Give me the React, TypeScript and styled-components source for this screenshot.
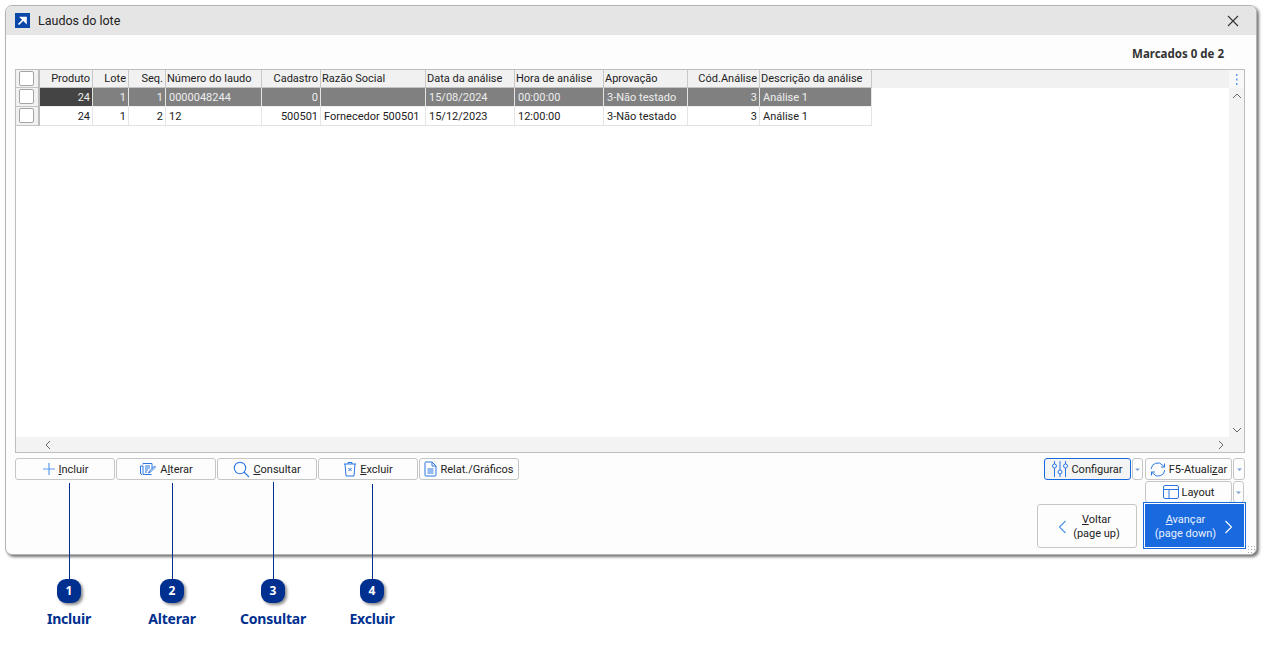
import React from "react";
import styled, { createGlobalStyle } from "styled-components";

const Global = createGlobalStyle`
  html, body { margin: 0; padding: 0; background: #fff; }
  body { font-family: Roboto, "Noto Sans", sans-serif; font-size: 11px; color: #222; }
  u { text-underline-offset: 1px; }
`;

const Page = styled.div`
  width: 1266px;
  height: 645px;
  overflow: hidden;
  padding: 5px 0 0 5px;
  box-sizing: border-box;
`;
const Win = styled.div`
  width: 1252px;
  height: 550px;
  box-sizing: border-box;
  border: 1px solid #b4b4b4;
  border-radius: 7px;
  background: #fdfdfd;
  box-shadow: 2px 2px 3px rgba(0, 0, 0, 0.55);
  display: flex;
  flex-direction: column;
  position: relative;
  overflow: hidden;
`;
const TitleBar = styled.div`
  height: 29px;
  background: #e5e5e5;
  display: flex;
  align-items: center;
  padding: 0 17px 0 9px;
  flex: none;
`;
const TitleText = styled.div`
  font-size: 12.5px;
  color: #222;
  margin-left: 8px;
  flex: 1;
`;
const Body = styled.div`
  flex: 1;
  padding: 0 11px 0 9px;
  display: flex;
  flex-direction: column;
`;
const Count = styled.div`
  height: 34px;
  line-height: 37px;
  text-align: right;
  font-family: "Noto Sans", sans-serif;
  font-weight: 700;
  font-size: 11.5px;
  color: #333;
  padding-right: 21px;
`;
const GridBox = styled.div`
  height: 384px;
  box-sizing: border-box;
  border: 1px solid #bdbdbd;
  display: flex;
  flex-direction: column;
  background: #fff;
`;
const GridMain = styled.div`
  flex: 1;
  display: flex;
  min-height: 0;
`;
const TableArea = styled.div`
  flex: 1;
  background: #fff;
`;
const COLS = "24px 53px 36px 37px 96px 59px 105px 89px 89px 84px 72px 112px";
const Row = styled.div`
  display: grid;
  grid-template-columns: ${COLS};
  height: 19px;
  box-sizing: border-box;
`;
const HeaderRow = styled(Row)`
  height: 18px;
`;
const HeaderStrip = styled.div`
  background: #f1f1f1;
  height: 18px;
`;
const Cell = styled.div<{ $right?: boolean; $sel?: boolean; $first?: boolean; $inset?: boolean }>`
  box-sizing: border-box;
  white-space: nowrap;
  overflow: hidden;
  line-height: 20px;
  font-size: 11px;
  padding: 0 2px 0 ${(p) => (p.$inset ? "3px" : "2px")};
  text-align: ${(p) => (p.$right ? "right" : "left")};
  border-right: 1px solid ${(p) => (p.$sel ? "#e4e4e4" : "#e6e6e6")};
  border-bottom: 1px solid ${(p) => (p.$sel ? "#f0f0f0" : "#e2e2e2")};
  background: ${(p) => (p.$first ? "#444" : p.$sel ? "#808080" : "#fff")};
  color: ${(p) => (p.$sel ? "#eeeeee" : "#222")};
`;
const HeadCell = styled.div<{ $right?: boolean }>`
  box-sizing: border-box;
  white-space: nowrap;
  overflow: hidden;
  line-height: 17px;
  font-size: 11px;
  padding: 0 ${(p) => (p.$right ? "2px" : "1px")};
  text-align: ${(p) => (p.$right ? "right" : "left")};
  background: #f1f1f1;
  border-right: 1px solid #c8c8c8;
  border-bottom: 1px solid #c4c4c4;
  color: #222;
`;
const CheckCell = styled.div`
  box-sizing: border-box;
  display: flex;
  align-items: flex-start;
  padding: 1px 0 0 3px;
  background: #f1f1f1;
  border-right: 2px solid #bdbdbd;
  border-bottom: 1px solid #c4c4c4;
`;
const Check = styled.span`
  width: 15px;
  height: 15px;
  box-sizing: border-box;
  background: #fff;
  border: 1px solid #a4a4a4;
  border-radius: 2px;
  display: block;
`;
const VScroll = styled.div`
  width: 15px;
  flex: none;
  background: #f3f3f3;
  display: flex;
  flex-direction: column;
`;
const Kebab = styled.div`
  width: 15px;
  height: 18px;
  background: #f8f8f8;
  display: flex;
  align-items: center;
  justify-content: center;
`;
const ScrollBtn = styled.div`
  width: 15px;
  height: 15px;
  display: flex;
  align-items: center;
  justify-content: center;
`;
const VTrack = styled.div`
  flex: 1;
  display: flex;
  flex-direction: column;
  justify-content: space-between;
`;
const HScroll = styled.div`
  height: 15px;
  flex: none;
  background: #f3f3f3;
  display: flex;
  justify-content: space-between;
  padding: 0 16px 0 24px;
`;
const Footer = styled.div`
  flex: 1;
  display: flex;
  justify-content: space-between;
  padding-top: 5px;
`;
const LeftTools = styled.div`
  display: flex;
  gap: 1px;
  align-items: flex-start;
`;
const ToolBtn = styled.button<{ $active?: boolean; $w?: number }>`
  width: ${(p) => p.$w ?? 100}px;
  height: 22px;
  box-sizing: border-box;
  padding: 0;
  display: flex;
  align-items: center;
  justify-content: center;
  gap: 3px;
  font-family: inherit;
  font-size: 11px;
  color: #222;
  background: ${(p) => (p.$active ? "#f4f4f4" : "#fdfdfd")};
  border: 1px solid ${(p) => (p.$active ? "#1a6adf" : "#c6c6c6")};
  border-radius: 3px;
`;
const Arrow = styled.button<{ $w?: number }>`
  width: ${(p) => p.$w ?? 11}px;
  height: 22px;
  box-sizing: border-box;
  padding: 0;
  background: #fdfdfd;
  border: 1px solid #c6c6c6;
  border-radius: 3px;
  display: flex;
  align-items: center;
  justify-content: center;
`;
const RightTools = styled.div`
  display: flex;
  flex-direction: column;
  align-items: flex-end;
  width: 210px;
`;
const ToolRow = styled.div`
  display: flex;
  align-items: flex-start;
  gap: 1px;
`;
const Row1 = styled(ToolRow)`
  height: 23px;
`;
const Row2 = styled(ToolRow)`
  height: 21px;
  padding-right: 1px;
`;
const GapBtn = styled.div`
  width: 0;
`;
const NavRow = styled.div`
  display: flex;
  align-items: flex-start;
  margin-right: -1px;
  position: relative;
`;
const Nav = styled.button`
  height: 44px;
  width: 100px;
  margin-top: 2px;
  box-sizing: border-box;
  padding: 2px 10px 0 20px;
  font-family: inherit;
  font-size: 11px;
  line-height: 14px;
  display: flex;
  align-items: center;
  justify-content: space-between;
  color: #222;
  background: #fdfdfd;
  border: 1px solid #c6c6c6;
  border-radius: 3px;
`;
const PrimaryNav = styled(Nav)`
  height: 47px;
  width: 103px;
  margin: 0 0 0 6px;
  padding: 2px 12px 0 3px;
  color: #e8f0ff;
  background: #1a6adf;
  border: 1px solid #1a6adf;
  border-radius: 0;
  box-shadow: inset 0 0 0 1px #fff;
`;
const NavLabel = styled.span`
  flex: 1;
  text-align: center;
`;
const Grip = styled.div`
  position: absolute;
  right: 1px;
  bottom: 1px;
  width: 8px;
  height: 8px;
  background-image: radial-gradient(#aaa 0.8px, transparent 1px);
  background-size: 3px 3px;
`;
const Callouts = styled.div`
  display: flex;
  padding-left: 14px;
  margin-top: 24px;
`;
const Callout = styled.div<{ $w: number }>`
  width: ${(p) => p.$w}px;
  flex: none;
`;
const CalloutInner = styled.div<{ $rise: number }>`
  width: 100px;
  display: flex;
  flex-direction: column;
  align-items: center;
  position: relative;
  &::before {
    content: "";
    position: absolute;
    left: 49.5px;
    top: ${(p) => -p.$rise}px;
    width: 1px;
    height: ${(p) => p.$rise}px;
    background: #00308f;
  }
`;
const Badge = styled.div`
  width: 24px;
  height: 24px;
  border-radius: 9px;
  background: #00308f;
  color: #fff;
  font-family: "Noto Sans", sans-serif;
  font-weight: 700;
  font-size: 12px;
  line-height: 24px;
  text-align: center;
  box-shadow: 2px 2px 3px rgba(0, 0, 0, 0.45);
`;
const BadgeLabel = styled.div`
  margin-top: 7px;
  color: #00308f;
  font-family: "Noto Sans", sans-serif;
  font-weight: 700;
  font-size: 14px;
  line-height: 18px;
  letter-spacing: -0.2px;
`;

const Chevron = ({ d, c = "#666" }: { d: string; c?: string }) => (
  <svg width="12" height="12" viewBox="0 0 12 12" fill="none" stroke={c} strokeWidth="1"><path d={d} /></svg>
);
const Dd = () => (
  <svg width="7" height="5" viewBox="0 0 7 5"><path d="M1 1.5h5L3.5 4z" fill="#7c9fd0" /></svg>
);
const B = "#2b78e4";
const IPlus = () => (
  <svg width="14" height="14" viewBox="0 0 14 14" stroke="#5b9bf0" strokeWidth="1.2"><path d="M7 1v12M1 7h12" /></svg>
);
const IEdit = () => (
  <svg width="18" height="14" viewBox="0 0 17 14" fill="none" stroke={B} strokeWidth="1"><path d="M3.5 2.5V1.5h9v5M1 4h2.5v8.5H12M1 4v7a1.5 1.5 0 0 0 1.5 1.5M5.5 4h5M5.5 6h5M5.5 8h3M5.5 10h2M16 5l-5 5-2 1 1-2 5-5z" /></svg>
);
const ISearch = () => (
  <svg width="17" height="17" viewBox="0 0 17 17" fill="none" stroke={B} strokeWidth="1.1"><circle cx="7" cy="7" r="5.7" /><path d="M11 11l5 5" /></svg>
);
const ITrash = () => (
  <svg width="14" height="16" viewBox="0 0 14 16" fill="none" stroke={B} strokeWidth="1"><path d="M1 3h12M5 3V1.5h4V3M2 3l1 12h8l1-12M5.5 7l3 3M8.5 7l-3 3" /></svg>
);
const IDoc = () => (
  <svg width="13" height="16" viewBox="0 0 13 16" fill="none" stroke={B} strokeWidth="1"><path d="M1.5 1h6.5l4 4v9a1 1 0 0 1-1 1h-9a1 1 0 0 1-1-1V2a1 1 0 0 1 .5-1zM8 1v4h4M3.5 8h6M3.5 10h6M3.5 12h6" /></svg>
);
const ISliders = () => (
  <svg width="16" height="18" viewBox="0 0 16 18" fill="none" stroke={B} strokeWidth="1"><path d="M2.5 1v3M2.5 8v9M8 1v9M8 14v3M13.5 1v3M13.5 8v9" /><circle cx="2.5" cy="6" r="2" /><circle cx="8" cy="12" r="2" /><circle cx="13.5" cy="6" r="2" /></svg>
);
const IRefresh = () => (
  <svg width="16" height="15" viewBox="0 0 16 15" fill="none" stroke={B} strokeWidth="1"><path d="M1.2 7a6.5 6.5 0 0 1 11.6-3.6L14.5 5M14.5 1.5V5H11M14.8 8a6.5 6.5 0 0 1-11.6 3.6L1.5 10M1.5 13.5V10H5" /></svg>
);
const ILayout = () => (
  <svg width="16" height="14" viewBox="0 0 16 14" fill="none" stroke={B} strokeWidth="1"><rect x=".5" y=".5" width="15" height="13" rx="1.5" /><path d="M.5 4.5h15M6 4.5v9" /></svg>
);

const headers: [string, boolean][] = [
  ["Produto", true], ["Lote", true], ["Seq.", true], ["Número do laudo", false], ["Cadastro", true],
  ["Razão Social", false], ["Data da análise", false], ["Hora de análise", false], ["Aprovação", false],
  ["Cód.Análise", true], ["Descrição da análise", false],
];
const rows = [
  ["24", "1", "1", "0000048244", "0", "", "15/08/2024", "00:00:00", "3-Não testado", "3", "Análise 1"],
  ["24", "1", "2", "12", "500501", "Fornecedor 500501", "15/12/2023", "12:00:00", "3-Não testado", "3", "Análise 1"],
];
const callouts = [
  { n: 1, label: "Incluir", w: 103, rise: 96 },
  { n: 2, label: "Alterar", w: 101, rise: 96 },
  { n: 3, label: "Consultar", w: 99, rise: 97 },
  { n: 4, label: "Excluir", w: 100, rise: 95 },
];

export default function App() {
  return (
    <Page>
      <Global />
      <Win>
        <TitleBar>
          <svg width="15" height="15" viewBox="0 0 15 15">
            <rect width="15" height="15" fill="#0a47a9" />
            <path d="M3.5 11.5L10 5M6 4.5h5v5z" stroke="#fff" strokeWidth="1.6" fill="#fff" />
          </svg>
          <TitleText>Laudos do lote</TitleText>
          <svg width="12" height="12" viewBox="0 0 12 12" stroke="#333" strokeWidth="1.1"><path d="M1 1l10 10M11 1L1 11" /></svg>
        </TitleBar>
        <Body>
          <Count>Marcados 0 de 2</Count>
          <GridBox>
            <GridMain>
              <TableArea>
                <HeaderStrip>
                  <HeaderRow>
                    <CheckCell><Check /></CheckCell>
                    {headers.map(([h, r]) => (
                      <HeadCell key={h} $right={r}>{h}</HeadCell>
                    ))}
                  </HeaderRow>
                </HeaderStrip>
                {rows.map((row, i) => (
                  <Row key={i}>
                    <CheckCell><Check /></CheckCell>
                    {row.map((c, j) => (
                      <Cell
                        key={j}
                        $right={headers[j][1]}
                        $sel={i === 0}
                        $first={i === 0 && j === 0}
                        $inset={!headers[j][1]}
                      >
                        {c}
                      </Cell>
                    ))}
                  </Row>
                ))}
              </TableArea>
              <VScroll>
                <Kebab>
                  <svg width="3" height="11" viewBox="0 0 3 11" fill="#5b9bf0"><rect x="1" y="0" width="1.5" height="2" /><rect x="1" y="4.5" width="1.5" height="2" /><rect x="1" y="9" width="1.5" height="2" /></svg>
                </Kebab>
                <VTrack>
                  <ScrollBtn><Chevron d="M2 8l4-4 4 4" /></ScrollBtn>
                  <ScrollBtn><Chevron d="M2 4l4 4 4-4" /></ScrollBtn>
                </VTrack>
              </VScroll>
            </GridMain>
            <HScroll>
              <ScrollBtn><Chevron d="M8 2L4 6l4 4" /></ScrollBtn>
              <ScrollBtn><Chevron d="M4 2l4 4-4 4" /></ScrollBtn>
            </HScroll>
          </GridBox>
          <Footer>
            <LeftTools>
              <ToolBtn><IPlus /><span><u>I</u>ncluir</span></ToolBtn>
              <ToolBtn><IEdit /><span>A<u>l</u>terar</span></ToolBtn>
              <ToolBtn><ISearch /><span><u>C</u>onsultar</span></ToolBtn>
              <ToolBtn><ITrash /><span><u>E</u>xcluir</span></ToolBtn>
              <ToolBtn><IDoc /><span>Relat./Gráficos</span></ToolBtn>
            </LeftTools>
            <RightTools>
              <Row1>
                <ToolBtn $active $w={87}><ISliders /><span>Configurar</span></ToolBtn>
                <Arrow><Dd /></Arrow>
                <GapBtn />
                <ToolBtn $w={87}><IRefresh /><span>F5-Atuali<u>z</u>ar</span></ToolBtn>
                <Arrow $w={12}><Dd /></Arrow>
              </Row1>
              <Row2>
                <ToolBtn $w={87}><ILayout /><span>Layout</span></ToolBtn>
                <Arrow><Dd /></Arrow>
              </Row2>
              <NavRow>
                <Nav>
                  <svg width="9" height="16" viewBox="0 0 9 16" fill="none" stroke="#4a90e8" strokeWidth="1.1"><path d="M7.5 2L1.5 8l6 6" /></svg>
                  <NavLabel><u>V</u>oltar<br />(page up)</NavLabel>
                </Nav>
                <PrimaryNav>
                  <NavLabel><u>A</u>vançar<br />(page down)</NavLabel>
                  <svg width="9" height="16" viewBox="0 0 9 16" fill="none" stroke="#fff" strokeWidth="1.1"><path d="M1.5 2l6 6-6 6" /></svg>
                </PrimaryNav>
              </NavRow>
            </RightTools>
          </Footer>
        </Body>
        <Grip />
      </Win>
      <Callouts>
        {callouts.map((c) => (
          <Callout key={c.n} $w={c.w}>
            <CalloutInner $rise={c.rise}>
              <Badge>{c.n}</Badge>
              <BadgeLabel>{c.label}</BadgeLabel>
            </CalloutInner>
          </Callout>
        ))}
      </Callouts>
    </Page>
  );
}
